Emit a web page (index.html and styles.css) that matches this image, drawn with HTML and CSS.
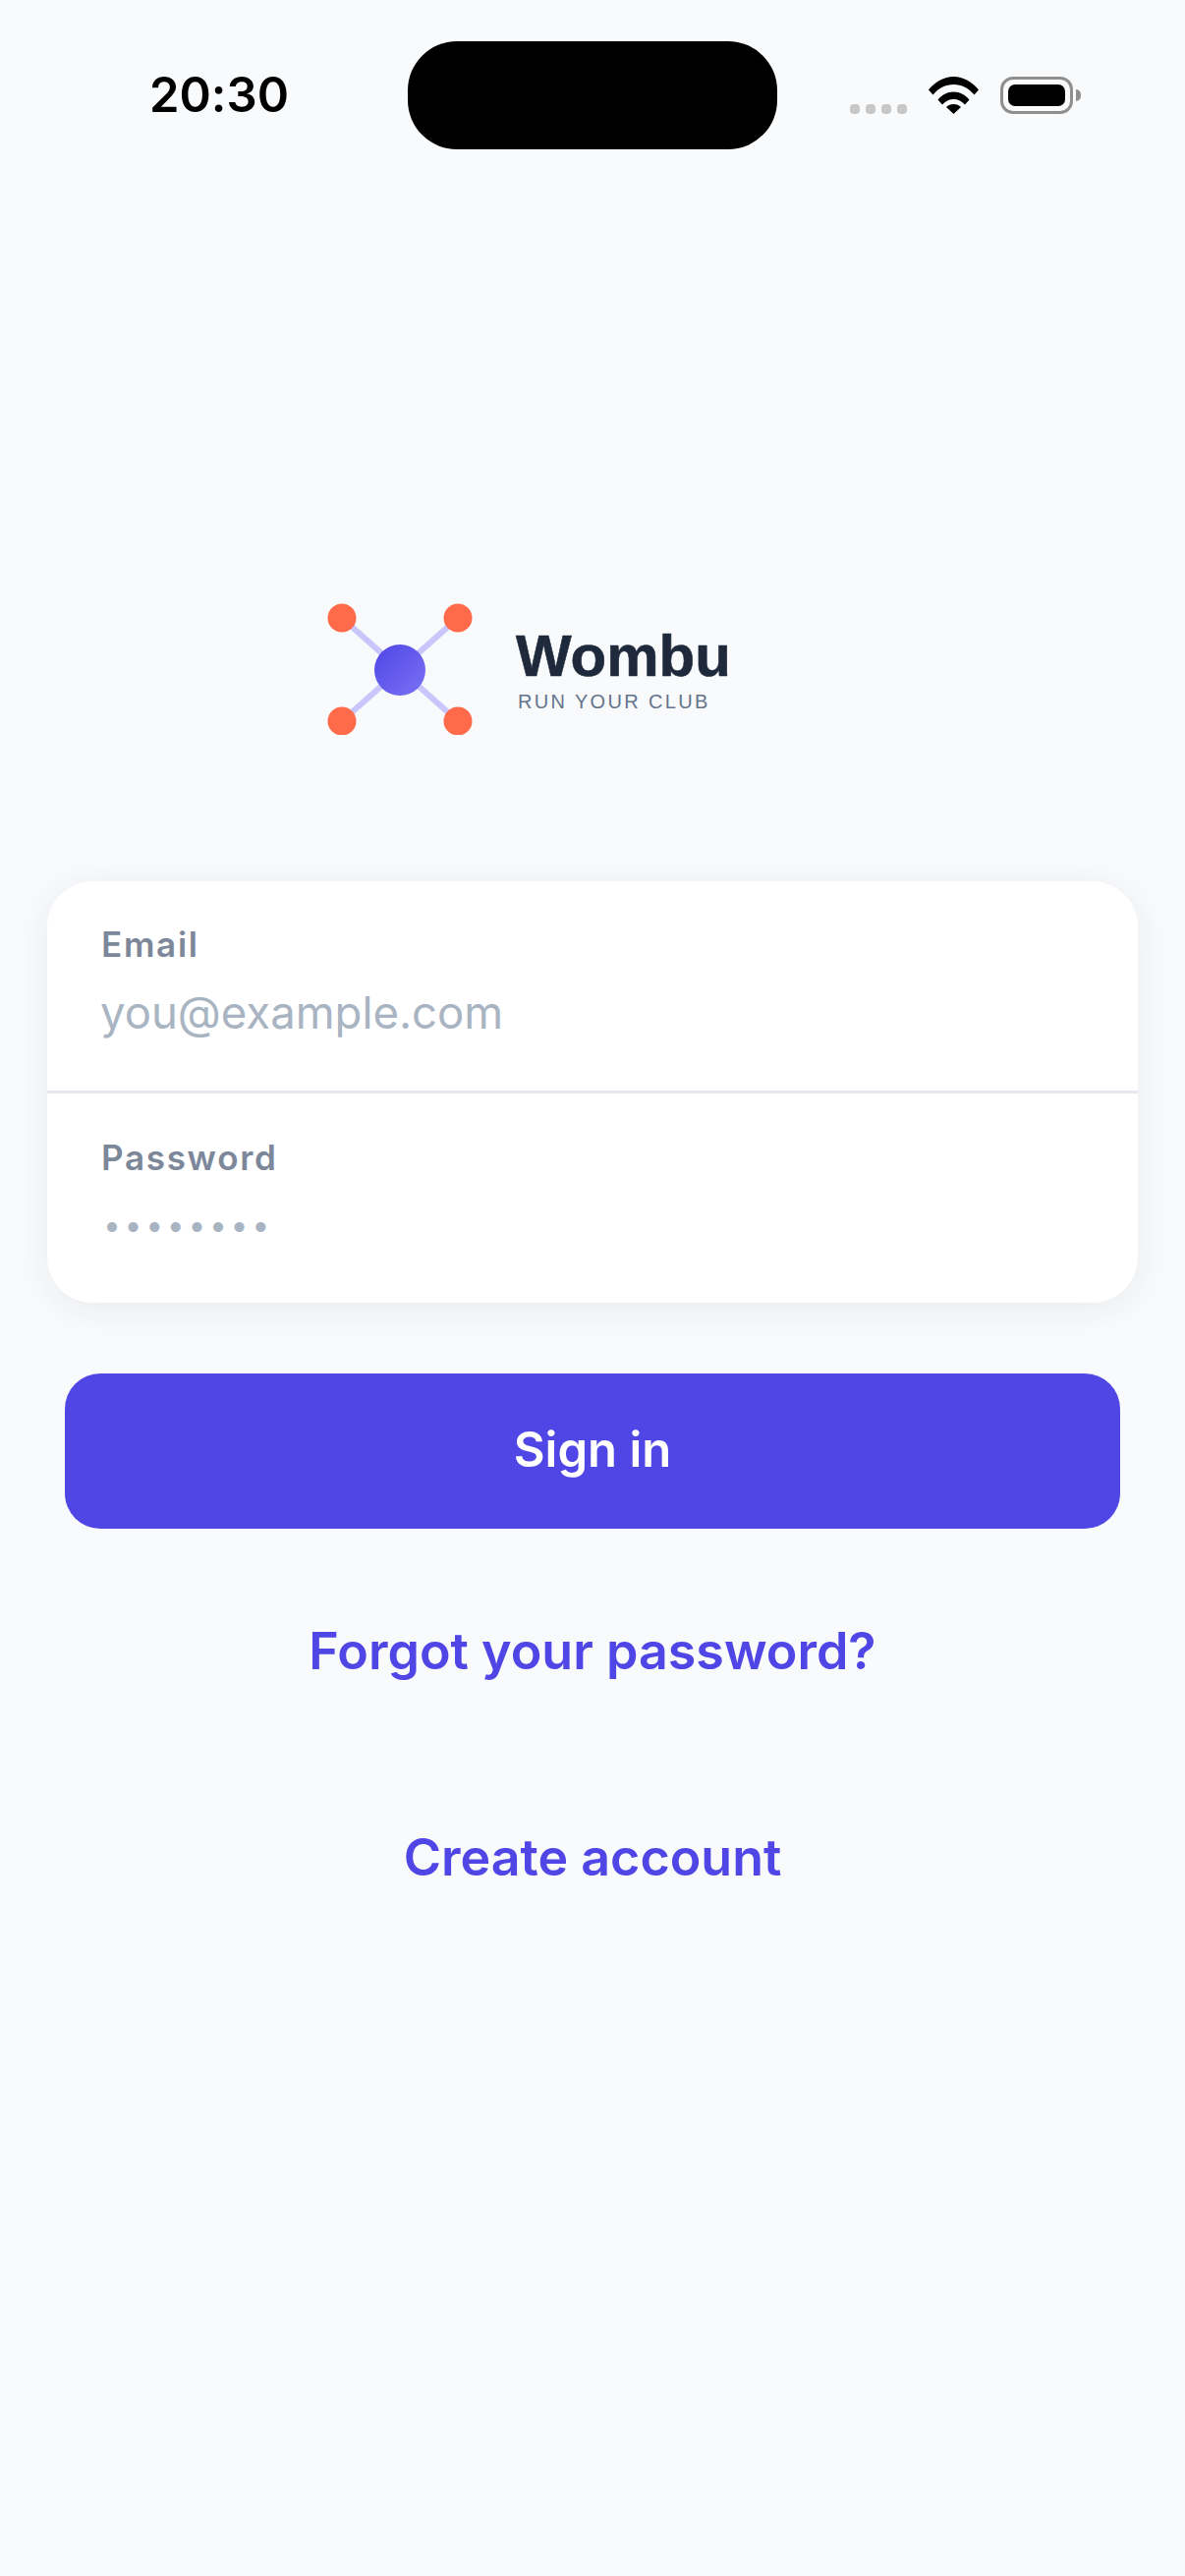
FILE: index.html
```html
<!DOCTYPE html>
<html lang="en">
<head>
<meta charset="utf-8">
<title>Wombu</title>
<link rel="stylesheet" href="styles.css">
</head>
<body>
<div class="page">
  <header class="status">
    <span class="time">20:30</span>
    <span class="island"></span>
    <div class="indicators">
      <div class="signal"><i></i><i></i><i></i><i></i></div>
      <svg class="wifi" viewBox="0 0 51 38" width="51" height="38"><path d="M0 13.500C6.500 5.500 15.500 0 25.500 0S44.500 5.500 51 13.500L46.500 18.500C41 12 33.800 8 25.500 8S10 12 4.500 18.500Z" fill="#000"/><path d="M9.500 23.500C13.500 18.500 19 15.500 25.500 15.500S37.500 18.500 41.500 23.500L37 28.500C34 25 30 23 25.500 23S17 25 14 28.500Z" fill="#000"/><path d="M18 31C20 29 22.500 28 25.500 28S31 29 33 31L25.500 38Z" fill="#000"/></svg>
      <div class="battery"><span class="battery-fill"></span></div>
      <span class="battery-cap"></span>
    </div>
  </header>

  <div class="brand">
    <svg class="mark" viewBox="0 0 148 134" width="148" height="134">
      <defs><linearGradient id="core" x1="0" y1="0" x2="1" y2="1"><stop offset="0" stop-color="#4f46e5"/><stop offset="1" stop-color="#7a71f5"/></linearGradient></defs>
      <g stroke="#c9c6fb" stroke-width="6"><line x1="15" y1="15" x2="133" y2="120"/><line x1="133" y1="15" x2="15" y2="120"/></g>
      <circle cx="15" cy="15" r="14.500" fill="#ff6b4a"/><circle cx="133" cy="15" r="14.500" fill="#ff6b4a"/>
      <circle cx="15" cy="120" r="14.500" fill="#ff6b4a"/><circle cx="133" cy="120" r="14.500" fill="#ff6b4a"/>
      <circle cx="74" cy="68" r="26" fill="url(#core)"/>
    </svg>
    <div class="brand-text">
      <div class="brand-name">Wombu</div>
      <div class="brand-tag">RUN YOUR CLUB</div>
    </div>
  </div>

  <form class="card">
    <div class="field field-email">
      <div class="label">Email</div>
      <div class="placeholder">you@example.com</div>
    </div>
    <div class="field field-pass">
      <div class="label">Password</div>
      <div class="dots">••••••••</div>
    </div>
  </form>

  <div class="button">Sign in</div>
  <div class="link link-forgot">Forgot your password?</div>
  <div class="link link-create">Create account</div>
</div>
</body>
</html>
```
FILE: styles.css
```css
* { box-sizing: border-box; }
html, body { margin: 0; padding: 0; }
body { background: #f9fafc; font-family: Inter, "Liberation Sans", sans-serif; font-feature-settings: "calt" 0; }
.page { width: 1206px; height: 2622px; display: flex; flex-direction: column; overflow: hidden; }

.status { height: 152px; padding-top: 42px; display: flex; align-items: flex-start; }
.time { width: 415px; padding: 36px 0 0 152px; font-size: 49px; line-height: 38px; font-weight: 600; color: #000; }
.island { width: 376px; height: 110px; border-radius: 50px; background: #000; }
.indicators { display: flex; align-items: flex-start; padding: 36px 0 0 74px; }
.signal { display: flex; gap: 6px; margin-top: 28px; }
.signal i { width: 10px; height: 10px; border-radius: 4px; background: #c8c8c8; }
.wifi { margin-left: 22px; }
.battery { width: 74px; height: 38px; margin-left: 22px; padding: 5px; border: 3px solid #8f8f8f; border-radius: 13px; }
.battery-fill { display: block; width: 100%; height: 100%; border-radius: 7px; background: #000; }
.battery-cap { width: 5px; height: 12px; margin: 13px 0 0 3px; background: #8f8f8f; border-radius: 0 6px 6px 0; }

.brand { display: flex; align-items: flex-start; margin: 462px 0 0 333px; }
.mark { flex: none; }
.brand-text { margin: 24px 0 0 44px; }
.brand-name { font-family: "Liberation Sans", Arial, sans-serif; font-weight: 700; font-size: 60px; line-height: 60px; color: #1e293b; -webkit-text-stroke: 0.6px #1e293b; }
.brand-tag { margin-top: 5px; font-family: "Liberation Sans", Arial, sans-serif; font-size: 20px; line-height: 22px; letter-spacing: 2.350px; color: #64748b; margin-left: 2px; }

.card { width: 1110px; height: 429px; margin: 149px 0 0 48px; background: #fff; border-radius: 46px; box-shadow: 0 6px 36px rgba(30, 41, 59, 0.07); }
.field { padding: 0 54px; }
.field-email { height: 216px; padding-top: 44px; border-bottom: 3px solid #e4e8ee; }
.field-pass { padding-top: 45px; }
.label { margin-left: 1px; font-size: 35px; line-height: 40px; font-weight: 600; letter-spacing: 1.700px; color: #7c8799; }
.placeholder { margin-top: 21px; font-size: 45.500px; line-height: 58px; color: #a9b4c2; }
.dots { margin-top: 29px; margin-left: 3px; font-size: 32px; line-height: 40px; letter-spacing: 3.600px; color: #a9b4c2; }

.button { width: 1074px; height: 158px; margin: 72px 0 0 66px; display: flex; align-items: center; justify-content: center; background: #4f46e5; border-radius: 36px; font-size: 49px; font-weight: 600; color: #fff; padding-bottom: 3px; }
.link { text-align: center; font-size: 52px; line-height: 64px; font-weight: 600; color: #4f46e5; }
.link-forgot { margin-top: 93px; }
.link-create { margin-top: 146px; }
```
